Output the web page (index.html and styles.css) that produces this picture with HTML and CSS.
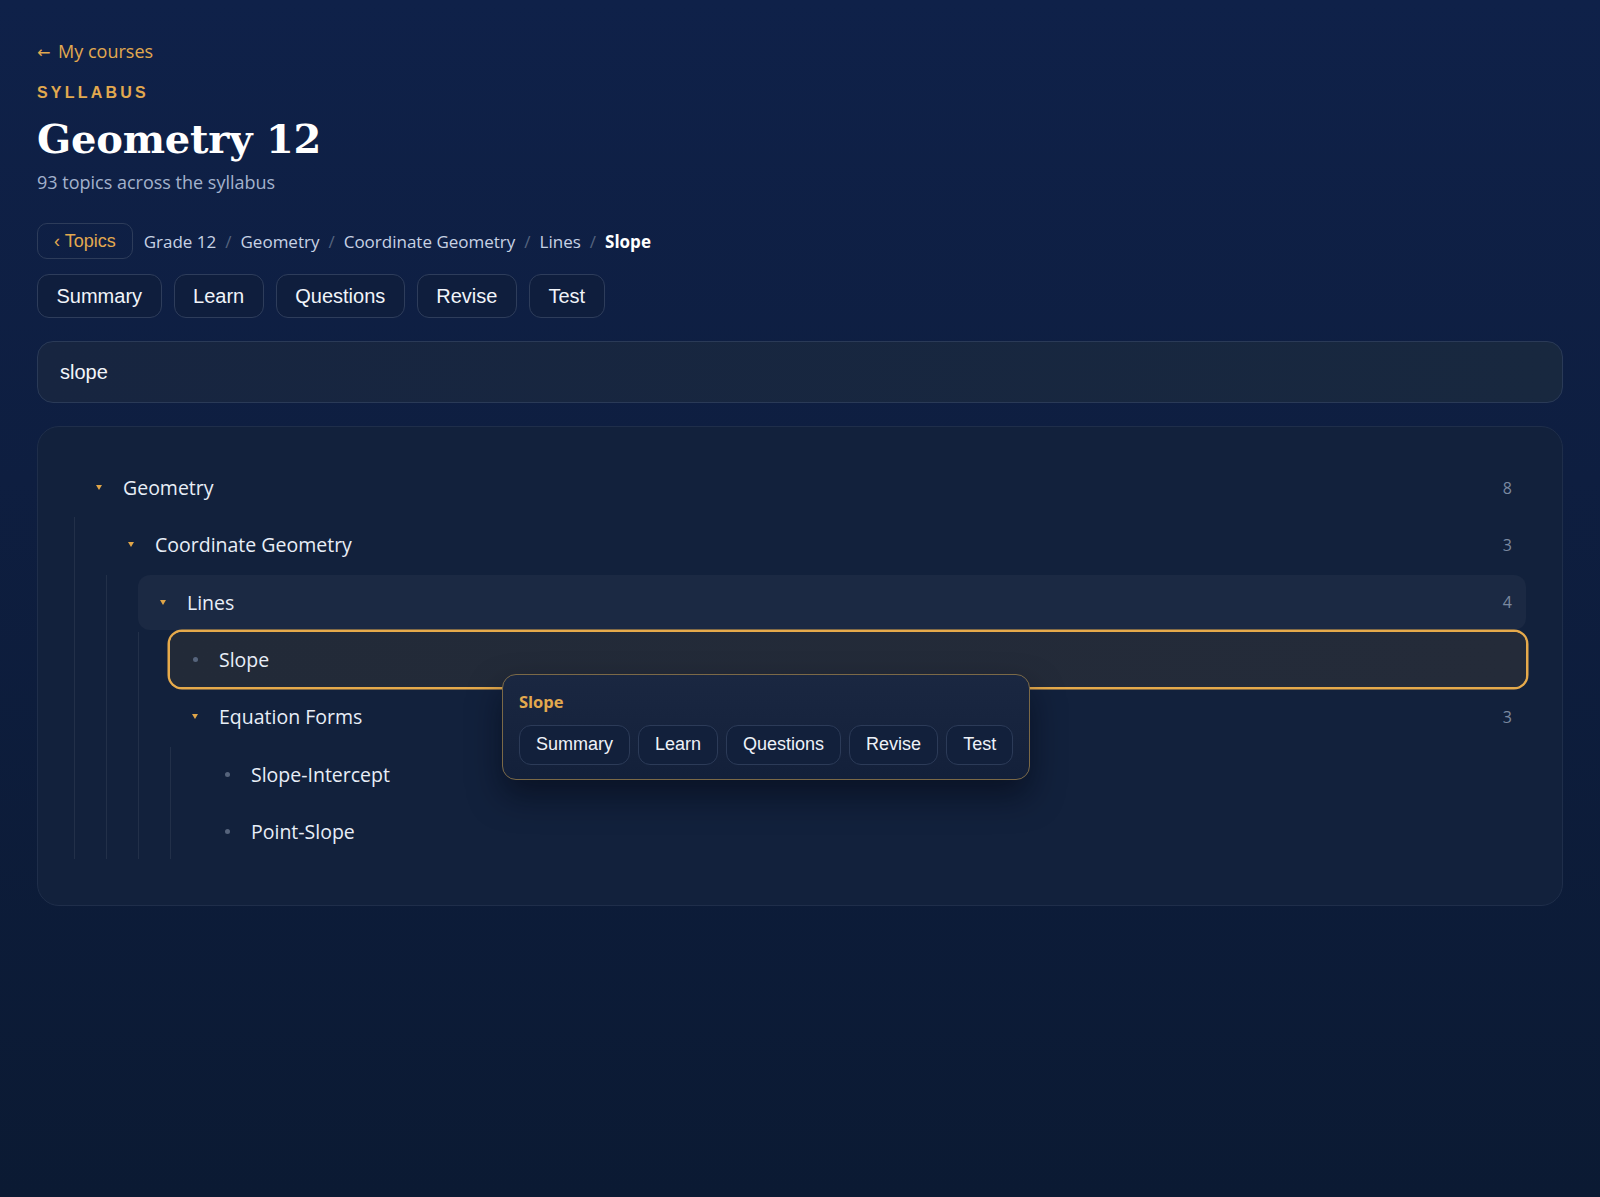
FILE: index.html
```html
<!DOCTYPE html>
<html>
<head>
    <title>Geometry 12 - Syllabus</title>
    <link rel="stylesheet" href="styles.css">
</head>
<body>
    <div class="page">
        <a class="back-link" href="#"><span class="back-arrow">&larr;</span> My courses</a>
        <div class="eyebrow">SYLLABUS</div>
        <h1 class="course-title">Geometry 12</h1>
        <p class="course-sub">93 topics across the syllabus</p>

        <nav class="crumbs">
            <button type="button" class="crumb-back">&lsaquo; Topics</button>
            <span class="crumb">Grade 12</span>
            <span class="crumb-sep">/</span>
            <span class="crumb">Geometry</span>
            <span class="crumb-sep">/</span>
            <span class="crumb">Coordinate Geometry</span>
            <span class="crumb-sep">/</span>
            <span class="crumb">Lines</span>
            <span class="crumb-sep">/</span>
            <span class="crumb crumb-current">Slope</span>
        </nav>

        <div class="tabs">
            <button type="button" class="tab">Summary</button>
            <button type="button" class="tab">Learn</button>
            <button type="button" class="tab">Questions</button>
            <button type="button" class="tab">Revise</button>
            <button type="button" class="tab">Test</button>
        </div>

        <input type="text" class="search" value="slope">

        <section class="tree-card">
            <ul class="tree">
                <li>
                    <div class="row">
                        <span class="twist open"></span>
                        <span class="label">Geometry</span>
                        <span class="count">8</span>
                    </div>
                    <ul class="children">
                        <li>
                            <div class="row">
                                <span class="twist open"></span>
                                <span class="label">Coordinate Geometry</span>
                                <span class="count">3</span>
                            </div>
                            <ul class="children">
                                <li>
                                    <div class="row row-hover">
                                        <span class="twist open"></span>
                                        <span class="label">Lines</span>
                                        <span class="count">4</span>
                                    </div>
                                    <ul class="children">
                                        <li>
                                            <div class="row row-selected">
                                                <span class="twist leaf"></span>
                                                <span class="label">Slope</span>

                                                <!-- quick actions for the selected topic -->
                                                <div class="popover">
                                                    <div class="popover-title">Slope</div>
                                                    <div class="popover-actions">
                                                        <button type="button" class="chip">Summary</button>
                                                        <button type="button" class="chip">Learn</button>
                                                        <button type="button" class="chip">Questions</button>
                                                        <button type="button" class="chip">Revise</button>
                                                        <button type="button" class="chip">Test</button>
                                                    </div>
                                                </div>
                                            </div>
                                        </li>
                                        <li>
                                            <div class="row">
                                                <span class="twist open"></span>
                                                <span class="label">Equation Forms</span>
                                                <span class="count">3</span>
                                            </div>
                                            <ul class="children">
                                                <li>
                                                    <div class="row">
                                                        <span class="twist leaf"></span>
                                                        <span class="label">Slope-Intercept</span>
                                                    </div>
                                                </li>
                                                <li>
                                                    <div class="row">
                                                        <span class="twist leaf"></span>
                                                        <span class="label">Point-Slope</span>
                                                    </div>
                                                </li>
                                            </ul>
                                        </li>
                                    </ul>
                                </li>
                            </ul>
                        </li>
                    </ul>
                </li>
            </ul>
        </section>
    </div>
</body>
</html>
```

FILE: styles.css
```css
html {
    min-height: 100%;
    background: linear-gradient(180deg, #0f2149 0%, #0e1e40 40%, #0b1a33 100%);
}

body {
    margin: 0;
    padding: 0;
    min-height: 1197px;
    font-family: "Open Sans", "Noto Sans", sans-serif;
    color: #e8eef7;
}

.page {
    padding: 38px 37px;
}

.back-link {
    display: block;
    height: 24px;
    margin-top: 1px;
    font-size: 18px;
    line-height: 24px;
    color: #e2a94f;
    text-decoration: none;
}

.back-arrow {
    margin-right: 3px;
    font-family: "DejaVu Sans", sans-serif;
    font-size: 16px;
    line-height: 1;
}

.eyebrow {
    margin-top: 20px;
    font-family: "Liberation Sans", Arial, sans-serif;
    font-size: 16px;
    font-weight: bold;
    line-height: 20px;
    letter-spacing: 3.2px;
    color: #e2a94f;
}

.course-title {
    margin: 12px 0 0;
    font-family: "DejaVu Serif", "Liberation Serif", serif;
    font-size: 40px;
    font-weight: bold;
    line-height: 48px;
    letter-spacing: -0.2px;
    color: #ffffff;
}

.course-sub {
    margin: 7px 0 0;
    font-size: 18px;
    line-height: 24px;
    color: #a3b2cc;
}

/* breadcrumb */
.crumbs {
    display: flex;
    align-items: center;
    margin-top: 29px;
    font-size: 17px;
}

.crumb-back {
    height: 36px;
    padding: 0 16px;
    margin-right: 11px;
    border: 1px solid #2d3c5a;
    border-radius: 10px;
    background: transparent;
    font-family: "Liberation Sans", Arial, sans-serif;
    font-size: 18px;
    color: #e3a94f;
}

.crumb {
    color: #c7d2e4;
}

.crumb-sep {
    margin: 0 9px;
    color: #55647f;
}

.crumb-current {
    font-weight: bold;
    color: #ffffff;
}

/* section tabs */
.tabs {
    display: flex;
    gap: 12px;
    margin-top: 15px;
}

.tab {
    height: 44px;
    padding: 0 18.5px;
    border: 1px solid #2e3d5b;
    border-radius: 12px;
    background: #0f1e3d;
    font-family: "Liberation Sans", Arial, sans-serif;
    font-size: 20px;
    color: #f1f4f9;
}

.search {
    display: block;
    box-sizing: border-box;
    width: 100%;
    height: 62px;
    margin-top: 23px;
    padding: 0 22px;
    border: 1px solid #2a3a57;
    border-radius: 16px;
    background: linear-gradient(90deg, #172540, #18283f);
    font-family: "Liberation Sans", Arial, sans-serif;
    font-size: 20px;
    color: #f2f5fa;
    outline: none;
}

/* topic tree */
.tree-card {
    margin-top: 23px;
    padding: 33px 36px 44px;
    border: 1px solid #1f2e4a;
    border-radius: 22px;
    background: #12213c;
}

.tree,
.children {
    list-style: none;
    margin: 0;
    padding: 0;
}

.children {
    border-left: 1px solid #223049;
    padding-left: 31px;
}

.row {
    position: relative;
    display: flex;
    align-items: center;
    height: 55px;
    margin-bottom: 2.33px;
    padding: 0 14px 0 20px;
    border-radius: 12px;
    font-size: 19.5px;
}

.row-hover {
    background: #1b2943;
}

.row-selected {
    background: linear-gradient(90deg, #222a38, #242b39);
    box-shadow: 0 0 0 2.5px #e6aa4b;
}

.twist {
    display: flex;
    align-items: center;
    justify-content: center;
    width: 10px;
    height: 10px;
    margin-right: 19px;
}

.twist.open::before {
    content: "";
    border-left: 3px solid transparent;
    border-right: 3px solid transparent;
    border-top: 5px solid #e0a548;
}

.twist.leaf::before {
    content: "";
    width: 5px;
    height: 5px;
    border-radius: 50%;
    background: #56647c;
}

.label {
    flex: 1;
    color: #e8eef7;
}

.count {
    font-size: 16px;
    color: #7b89a0;
}

/* popover with actions for the selected topic */
.popover {
    position: absolute;
    left: 332px;
    top: 42px;
    z-index: 10;
    padding: 16px 16px 14px;
    border: 1px solid #7b6947;
    border-radius: 14px;
    background: linear-gradient(180deg, #1a2741, #13203a);
    box-shadow: 0 16px 32px rgba(3, 8, 20, 0.55);
}

.popover-title {
    font-size: 16.5px;
    font-weight: bold;
    line-height: 22px;
    color: #e3a94e;
}

.popover-actions {
    display: flex;
    gap: 8px;
    margin-top: 12px;
}

.chip {
    height: 40px;
    padding: 0 16px;
    border: 1px solid #2c3b58;
    border-radius: 12px;
    background: #12203b;
    font-family: "Liberation Sans", Arial, sans-serif;
    font-size: 18px;
    color: #eef2f8;
}
```
